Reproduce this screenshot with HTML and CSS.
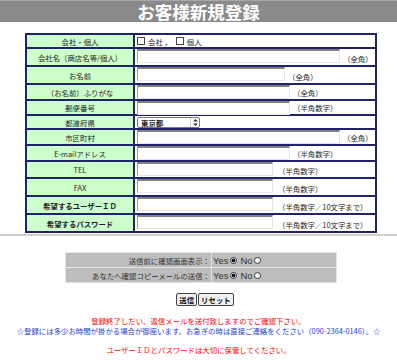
FILE: index.html
```html
<!DOCTYPE html>
<html lang="ja">
<head>
<meta charset="utf-8">
<title>お客様新規登録</title>
<link rel="stylesheet" href="styles.css">
</head>
<body>
<div class="header"><span class="title">お客様新規登録</span></div>

<div class="form">
  <div class="lbl">会社・個人</div>
  <div class="fld mid"><input type="checkbox" class="cb"><span class="opt">会社 ，</span><input type="checkbox" class="cb"><span class="opt">個人</span></div>

  <div class="lbl">会社名（商店名等/個人）</div>
  <div class="fld"><input type="text" class="inp w203"><span class="sfx">（全角）</span></div>

  <div class="lbl">お名前</div>
  <div class="fld"><input type="text" class="inp w148"><span class="sfx">（全角）</span></div>

  <div class="lbl">（お名前）ふりがな</div>
  <div class="fld"><input type="text" class="inp w153"><span class="sfx">（全角）</span></div>

  <div class="lbl">郵便番号</div>
  <div class="fld"><input type="text" class="inp w153"><span class="sfx">（半角数字）</span></div>

  <div class="lbl">都道府県</div>
  <div class="fld"><span class="select">東京都<span class="arrow"><svg width="5" height="7" viewBox="0 0 5 7"><path d="M2.5 0 L5 2.5 L0 2.5 Z M2.5 7 L5 4.5 L0 4.5 Z" fill="#333"/></svg></span></span></div>

  <div class="lbl">市区町村</div>
  <div class="fld"><input type="text" class="inp w203"><span class="sfx">（全角）</span></div>

  <div class="lbl">E-mailアドレス</div>
  <div class="fld"><input type="text" class="inp w153"><span class="sfx">（半角数字）</span></div>

  <div class="lbl">TEL</div>
  <div class="fld"><input type="text" class="inp w136"><span class="sfx sfx-wide">（半角数字）</span></div>

  <div class="lbl">FAX</div>
  <div class="fld"><input type="text" class="inp w136"><span class="sfx sfx-wide">（半角数字）</span></div>

  <div class="lbl bold">希望するユーザーＩＤ</div>
  <div class="fld"><input type="text" class="inp w136"><span class="sfx sfx-wide">（半角数字／10文字まで）</span></div>

  <div class="lbl bold">希望するパスワード</div>
  <div class="fld"><input type="password" class="inp w136"><span class="sfx sfx-wide">（半角数字／10文字まで）</span></div>
</div>

<div class="rule"></div>

<div class="opts">
  <div class="oq">送信前に確認画面表示：</div>
  <div class="oa"><span>Yes</span><span class="radio on"></span><span>No</span><span class="radio"></span></div>
  <div class="oq">あなたへ確認コピーメールの送信：</div>
  <div class="oa"><span>Yes</span><span class="radio on"></span><span>No</span><span class="radio"></span></div>
</div>

<div class="buttons">
  <button type="submit" class="btn">送信</button><button type="reset" class="btn">リセット</button>
</div>

<div class="notes">
  <div class="red">登録終了しだい、返信メールを送付致しますのでご確認下さい。</div>
  <div class="blue">☆登録には多少お時間が掛かる場合が御座います。お急ぎの時は直接ご連絡をください（090-2364-0146）。☆</div>
  <div class="blank"></div>
  <div class="red">ユーザーＩＤとパスワードは大切に保管してください。</div>
</div>
</body>
</html>
```

FILE: styles.css
```css
* { box-sizing: border-box; }

body {
  margin: 0;
  background: #ffffff;
  color: #1e1e1e;
  font-family: "Noto Sans CJK JP", "Noto Sans", sans-serif;
  font-size: 7.4px;
}

.header {
  height: 22px;
  background: #8a8a8a;
  box-shadow: inset 0 1px 0 #a8a8a8;
  display: flex;
  align-items: center;
  justify-content: center;
  overflow: visible;
}

.title {
  color: #ffffff;
  font-weight: bold;
  font-size: 17.5px;
  line-height: 18px;
  padding-top: 1px;
}

.form {
  display: grid;
  width: 352px;
  margin: 11px 0 0 25px;
  padding: 2px;
  gap: 2px;
  background: #22226a;
  grid-template-columns: 106px 240px;
  grid-template-rows: 12px 16px 16px 14px 13px 12px 14px 14px 15px 16px 16px 16px;
}

.lbl {
  background: #ccffcc;
  display: flex;
  align-items: center;
  justify-content: center;
  white-space: nowrap;
}

.lbl.bold { font-weight: bold; }

.fld {
  background: #ffffff;
  display: flex;
  align-items: flex-start;
  padding-left: 2px;
  white-space: nowrap;
}

.fld.mid { align-items: center; }

.cb {
  appearance: none;
  -webkit-appearance: none;
  width: 8px;
  height: 8px;
  margin: 0 3px 0 0;
  border: 1px solid #444;
  background: #fff;
}

.opt { margin-right: 4px; }

.inp {
  appearance: none;
  -webkit-appearance: none;
  height: 14px;
  margin: 0;
  padding: 0;
  border-style: solid;
  border-width: 2px 1px 1px 1px;
  border-color: #808080 #e6e6e6 #e6e6e6 #a0a0a0;
  background: #ffffff;
  outline: none;
}

.w203 { width: 203px; }
.w148 { width: 148px; }
.w153 { width: 153px; }
.w136 { width: 136px; }

.sfx {
  align-self: flex-end;
  line-height: 12px;
  margin-left: 3px;
}

.sfx-wide { margin-left: 5px; }

.select {
  display: flex;
  align-items: center;
  width: 63px;
  height: 11px;
  margin-top: 1px;
  padding-left: 3px;
  border: 1px solid #7a7a7a;
  border-radius: 2px;
  background: #ffffff;
  font-weight: bold;
  line-height: 9px;
}

.arrow {
  margin-left: auto;
  width: 9px;
  height: 9px;
  border-left: 1px solid #cccccc;
  display: flex;
  align-items: center;
  justify-content: center;
}

.arrow svg { display: block; }

.rule {
  height: 2px;
  margin-top: 1px;
  background: #d0d0d0;
}

.opts {
  display: grid;
  width: 272px;
  margin: 16px 0 0 65px;
  padding: 1px;
  gap: 1px;
  background: #e4e4e4;
  grid-template-columns: 145px 124px;
  grid-template-rows: 14px 14px;
}

.oq, .oa {
  background: #bdbdbd;
  display: flex;
  align-items: center;
  white-space: nowrap;
  color: #333333;
}

.oq {
  justify-content: flex-end;
  padding-right: 1px;
}

.oa {
  padding-left: 1px;
  font-family: "Liberation Sans", Arial, sans-serif;
  font-size: 9.5px;
}

.radio {
  display: inline-block;
  width: 7px;
  height: 7px;
  margin: 0 4px 0 1px;
  border: 1px solid #333333;
  border-radius: 50%;
  background: #ffffff;
}

.radio.on {
  background: radial-gradient(circle, #111111 0 1.6px, #ffffff 2.2px);
}

.buttons {
  display: flex;
  justify-content: center;
  padding-left: 12px;
  margin-top: 10px;
}

.btn {
  height: 13px;
  margin: 0 0 0 1px;
  padding: 0 2px;
  border: 1px solid #444444;
  border-radius: 2px;
  background: #efefef;
  font-family: "Noto Sans CJK JP", sans-serif;
  font-size: 7.4px;
  font-weight: bold;
  line-height: 10px;
  color: #111111;
}

.notes {
  margin-top: 10px;
  text-align: center;
  line-height: 9.5px;
  white-space: nowrap;
}

.blank { height: 9.5px; }

.red { color: #ff0000; }
.blue { color: #1f3cd8; }
```
